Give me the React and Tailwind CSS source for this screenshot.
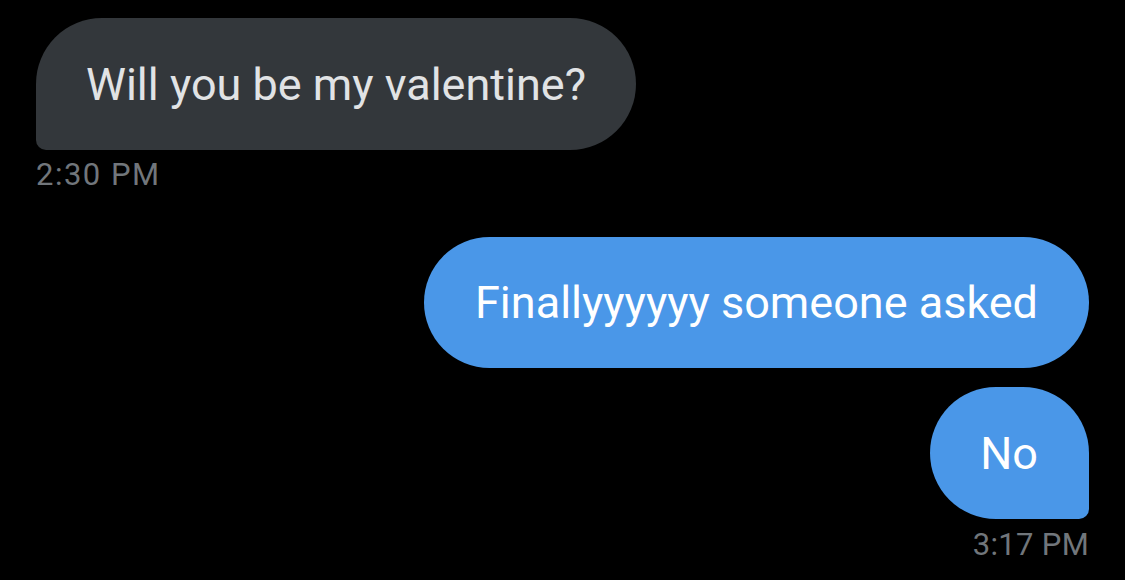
export default function App() {
    return (
        <div className="w-[1125px] h-[580px] bg-black px-[36px] pt-[18px] flex flex-col font-['Roboto',sans-serif] overflow-hidden">
            <div className="self-start h-[132px] flex items-center px-[50px] bg-[#33373b] rounded-[66px] rounded-bl-[10px] text-[#e1e3e5] text-[45px] leading-none">
                Will you be my valentine?
            </div>
            <div className="mt-[8px] text-[#71767b] text-[31px] leading-[34px] tracking-[1.5px]">2:30 PM</div>

            <div className="self-end mt-[45px] h-[131px] flex items-center pl-[51px] pr-[51px] bg-[#4a97e8] rounded-[66px] text-white text-[45px] leading-none">
                Finallyyyyyy someone asked
            </div>
            <div className="self-end mt-[19px] h-[132px] flex items-center pl-[50px] pr-[51px] bg-[#4a97e8] rounded-[66px] rounded-br-[10px] text-white text-[45px] leading-none">
                No
            </div>
            <div className="self-end mt-[9px] text-[#71767b] text-[31px] leading-[34px] tracking-[0.3px]">3:17 PM</div>
        </div>
    );
}
